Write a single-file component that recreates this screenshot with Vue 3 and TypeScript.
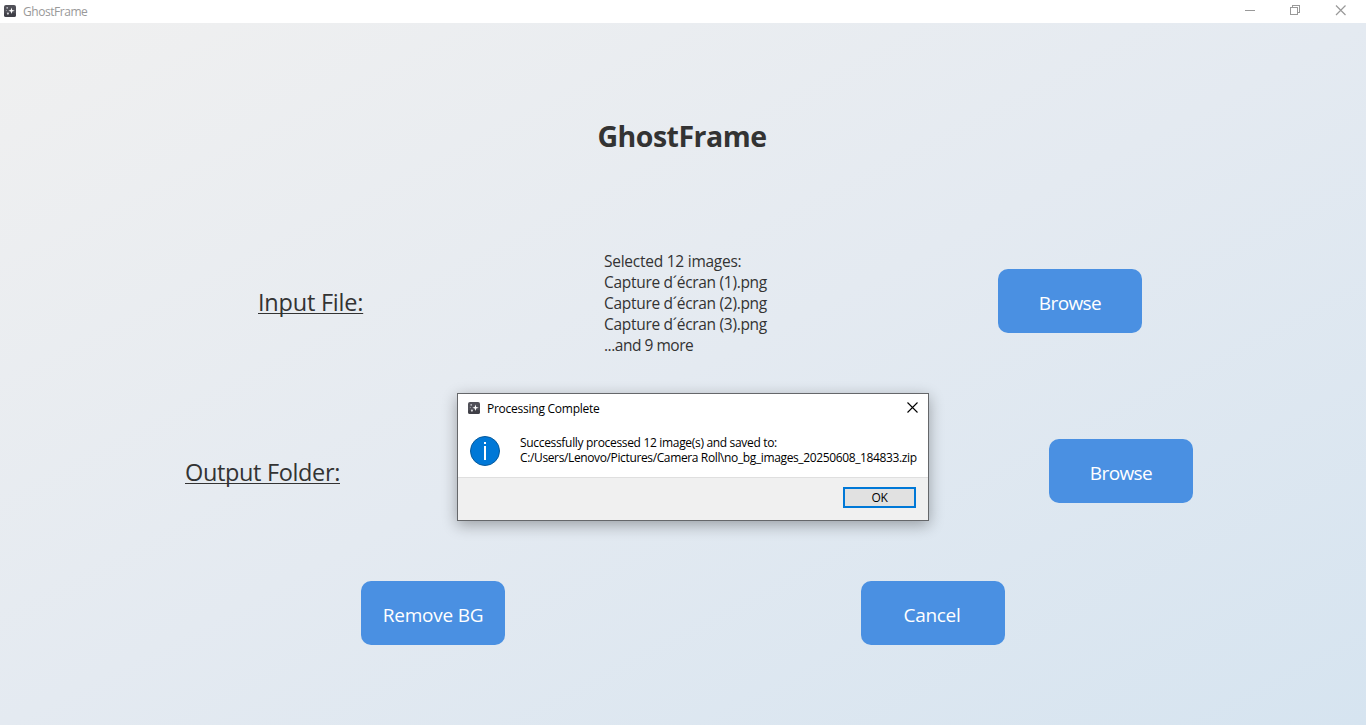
<script setup lang="ts">
import { ref } from 'vue'

const files = ref<string[]>([
  'Capture d´écran (1).png',
  'Capture d´écran (2).png',
  'Capture d´écran (3).png',
])
</script>

<template>
  <div class="window">
    <header class="titlebar">
      <svg class="app-icon" width="12" height="12" viewBox="0 0 12 12">
        <rect width="12" height="12" rx="2" fill="#505058" />
        <rect y="8" width="12" height="4" rx="2" fill="#3f3f47" />
        <path d="M7.5 2.4 8.2 4.9 10.8 5.7 8.2 6.5 7.5 9 6.7 6.5 4.4 5.7 6.7 4.9Z" fill="#fff" />
        <circle cx="3.2" cy="2.8" r=".9" fill="#c4c4ca" />
        <circle cx="2.3" cy="5.4" r=".5" fill="#a9a9b0" />
        <circle cx="3.9" cy="8.6" r="1.1" fill="#d4d4d8" />
      </svg>
      <span class="titlebar-text">GhostFrame</span>
      <svg class="controls" width="102" height="11" viewBox="0 0 102 11" fill="none" stroke="#999" shape-rendering="crispEdges">
        <path d="M0 5.5h10M45.5 2.5h7v7h-7zM47.5 2.5v-2h7v7h-2" />
        <path d="M91 .5l9.5 9.5M100.5 .5l-9.5 9.5" shape-rendering="auto" stroke-width="1.2" />
      </svg>
    </header>
    <main class="content">
      <h1>GhostFrame</h1>
      <section class="row input-row">
        <span class="label input-label">Input File:</span>
        <div class="files">
          <div class="selected">Selected 12 images:</div>
          <div v-for="file in files" :key="file">{{ file }}</div>
          <div class="more">...and 9 more</div>
        </div>
        <button class="action">Browse</button>
      </section>
      <section class="row output-row">
        <span class="label output-label">Output Folder:</span>
        <button class="action">Browse</button>
      </section>
      <section class="row actions">
        <button class="action remove">Remove BG</button>
        <button class="action cancel">Cancel</button>
      </section>
    </main>
    <div class="dialog" role="dialog">
      <div class="dialog-title">
        <svg width="12" height="12" viewBox="0 0 12 12">
          <rect width="12" height="12" rx="2" fill="#505058" />
          <rect y="8" width="12" height="4" rx="2" fill="#3f3f47" />
          <path d="M7.5 2.4 8.2 4.9 10.8 5.7 8.2 6.5 7.5 9 6.7 6.5 4.4 5.7 6.7 4.9Z" fill="#fff" />
          <circle cx="3.2" cy="2.8" r=".9" fill="#c4c4ca" />
          <circle cx="2.3" cy="5.4" r=".5" fill="#a9a9b0" />
          <circle cx="3.9" cy="8.6" r="1.1" fill="#d4d4d8" />
        </svg>
        <span class="dialog-name">Processing Complete</span>
        <svg class="close" width="11" height="11" viewBox="0 0 11 11" stroke="#000" stroke-width="1.1">
          <path d="M.5 .5l10 10M10.5 .5l-10 10" />
        </svg>
      </div>
      <div class="dialog-body">
        <svg width="30" height="30" viewBox="0 0 30 30">
          <circle cx="15" cy="15" r="14.5" fill="#0078d7" stroke="#075a9c" />
          <path d="M14 6h2v2h-2zM14 10h2v14h-2z" fill="#fff" />
        </svg>
        <div class="message">
          <div class="line-one">Successfully processed 12 image(s) and saved to:</div>
          <div class="line-two">C:/Users/Lenovo/Pictures/Camera Roll\no_bg_images_20250608_184833.zip</div>
        </div>
      </div>
      <div class="dialog-footer"><button class="ok">OK</button></div>
    </div>
  </div>
</template>

<style>
body { margin: 0; overflow: hidden; }
</style>

<style scoped>
.window {
  position: relative;
  width: 1366px;
  height: 725px;
  display: flex;
  flex-direction: column;
  font-family: "Open Sans", "Noto Sans", sans-serif;
  color: #333;
}
.window * { box-sizing: border-box; white-space: nowrap; }
svg { display: block; flex: none; }
.titlebar {
  height: 23px;
  flex: none;
  background: #fff;
  display: flex;
  align-items: flex-start;
  padding: 5px 19px 0 4px;
}
.titlebar-text {
  margin: -1px 0 0 7px;
  font-size: 12px;
  line-height: 16px;
  letter-spacing: -.45px;
  color: #999;
}
.controls { margin-left: auto; }
.content {
  flex: 1;
  background: linear-gradient(to bottom right, #f0f0f0, #e4eaf1 50%, #d6e4f0);
}
h1 {
  margin: 0;
  padding: 93px 2px 0 0;
  height: 246px;
  text-align: center;
  font-size: 28.5px;
  line-height: 40px;
  font-weight: 700;
  letter-spacing: -.5px;
}
.row { display: flex; align-items: flex-start; }
.input-row { height: 64px; padding: 0 224px 0 258px; justify-content: space-between; }
.output-row { height: 64px; margin-top: 106px; padding: 0 173px 0 185px; justify-content: space-between; }
.actions { margin-top: 78px; padding-left: 361px; gap: 356px; }
.label {
  font-size: 23.5px;
  line-height: 32px;
  margin-top: 17px;
  text-decoration: underline;
  text-decoration-thickness: 1px;
  text-underline-offset: 2px;
  text-decoration-skip-ink: none;
}
.input-label { width: 106px; letter-spacing: -.22px; }
.output-label { letter-spacing: -.35px; }
.files {
  width: 164px;
  margin: -18px 0 0 10px;
  font-size: 15.5px;
  line-height: 21px;
  letter-spacing: -.3px;
}
.selected { letter-spacing: -.25px; }
.more { letter-spacing: -.48px; }
.action {
  width: 144px;
  height: 64px;
  padding: 4px 0 0;
  border: 0;
  border-radius: 10px;
  background: #4a90e2;
  color: #fff;
  font: 19px "Open Sans", sans-serif;
  letter-spacing: -.6px;
}
.remove { letter-spacing: -.22px; }
.cancel { letter-spacing: -.3px; padding-right: 2px; }
.dialog {
  position: absolute;
  left: 457px;
  top: 393px;
  width: 472px;
  height: 128px;
  border: 1px solid #65676a;
  background: #fff;
  color: #000;
  font-size: 12px;
  line-height: 15px;
  box-shadow: 0 4px 14px rgba(0, 0, 0, .32);
}
.dialog-title { height: 42px; display: flex; padding: 8px 10px 0; }
.dialog-name { margin: -1px 0 0 7px; letter-spacing: -.25px; }
.close { margin-left: auto; }
.dialog-body { height: 41px; display: flex; padding-left: 12px; }
.message { margin: -1px 0 0 20px; }
.line-one { letter-spacing: -.32px; }
.line-two { letter-spacing: -.37px; }
.dialog-footer {
  height: 43px;
  border-top: 1px solid #dfdfdf;
  background: #f0f0f0;
  padding: 9px 12px;
  display: flex;
  justify-content: flex-end;
}
.ok {
  width: 73px;
  height: 21px;
  border: 2px solid #0078d7;
  background: #e1e1e1;
  padding: 0;
  font: 12px "Open Sans", sans-serif;
  letter-spacing: -.3px;
  color: #000;
}
</style>
